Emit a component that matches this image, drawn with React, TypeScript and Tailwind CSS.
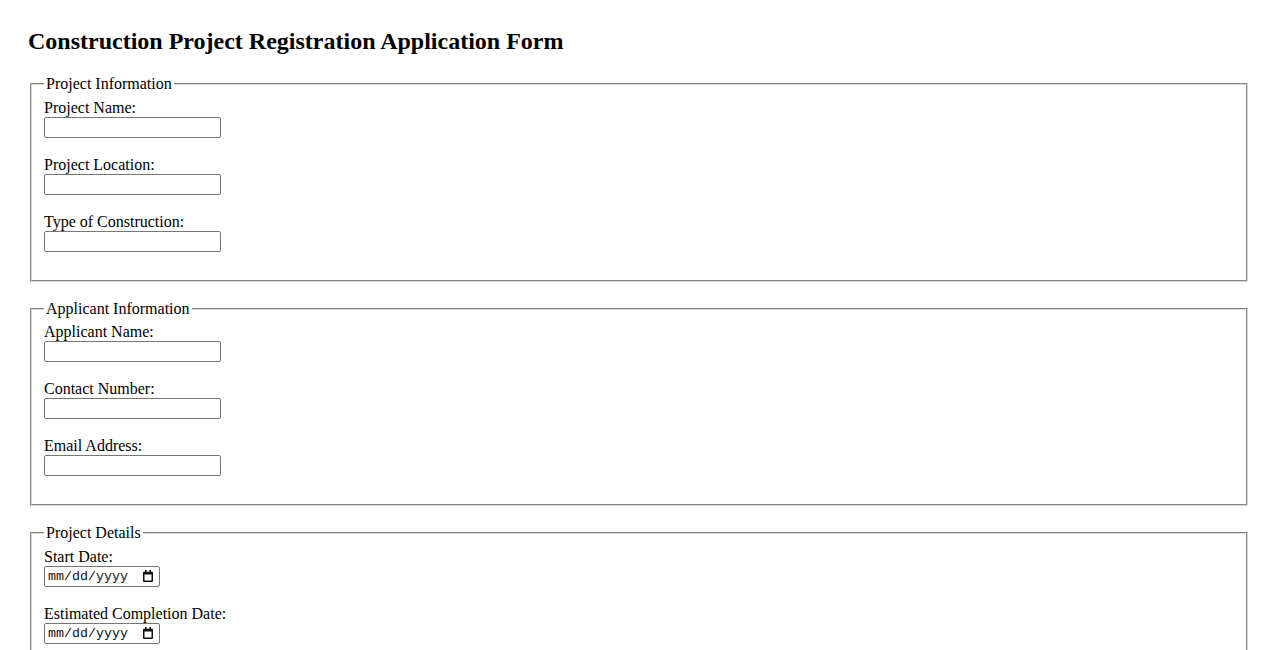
import React from "react";

function TextField({ label }: { label: string }) {
  return (
    <div className="mb-[18px]">
      <label className="block">{label}</label>
      <input
        type="text"
        className="block w-[177px] h-[21px] border border-[#767676] rounded-[2px] bg-white px-[2px] text-[13.33px] font-['Liberation_Sans',Arial,sans-serif] outline-none"
      />
    </div>
  );
}

function CalendarIcon() {
  return (
    <svg width="10" height="12" viewBox="0 0 10 12" aria-hidden="true">
      <rect x="2" y="0" width="1.6" height="2.2" fill="#111" />
      <rect x="6.4" y="0" width="1.6" height="2.2" fill="#111" />
      <path
        fillRule="evenodd"
        fill="#111"
        d="M1 1.8h8a1 1 0 0 1 1 1v8.2a1 1 0 0 1-1 1H1a1 1 0 0 1-1-1V2.8a1 1 0 0 1 1-1z M1.5 4.6v5.9h7V4.6z"
      />
    </svg>
  );
}

function DateField({ label }: { label: string }) {
  return (
    <div className="mb-[18px]">
      <label className="block">{label}</label>
      <div className="flex items-center justify-between w-[116px] h-[21px] border border-[#767676] rounded-[2px] bg-white pl-[3px] pr-[6px] font-['Liberation_Mono','DejaVu_Sans_Mono',monospace] text-[13.33px] text-[#111]">
        <span>mm/dd/yyyy</span>
        <CalendarIcon />
      </div>
    </div>
  );
}

function Section({ title, children }: { title: string; children: React.ReactNode }) {
  return (
    <fieldset className="mx-[2px] mb-[18px] border-2 [border-style:groove] border-[#d8d8d8] px-[12px] pt-[5.6px] pb-[10px]">
      <legend className="px-[2px]">{title}</legend>
      {children}
    </fieldset>
  );
}

export default function App() {
  return (
    <div className="min-h-screen bg-white text-black font-['Liberation_Serif','Times_New_Roman',serif] text-[16px] leading-[normal] px-[28px] pt-[28px] pb-[28px]">
      <h2 className="text-[24px] font-bold mb-[20px]">Construction Project Registration Application Form</h2>
      <form>
        <Section title="Project Information">
          <TextField label="Project Name:" />
          <TextField label="Project Location:" />
          <TextField label="Type of Construction:" />
        </Section>
        <Section title="Applicant Information">
          <TextField label="Applicant Name:" />
          <TextField label="Contact Number:" />
          <TextField label="Email Address:" />
        </Section>
        <Section title="Project Details">
          <DateField label="Start Date:" />
          <DateField label="Estimated Completion Date:" />
          <TextField label="Estimated Budget:" />
        </Section>
        <button
          type="button"
          className="border border-[#767676] rounded-[2px] bg-[#efefef] px-[6px] py-[1px] text-[13.33px] font-['Liberation_Sans',Arial,sans-serif]"
        >
          Submit Application
        </button>
      </form>
    </div>
  );
}
